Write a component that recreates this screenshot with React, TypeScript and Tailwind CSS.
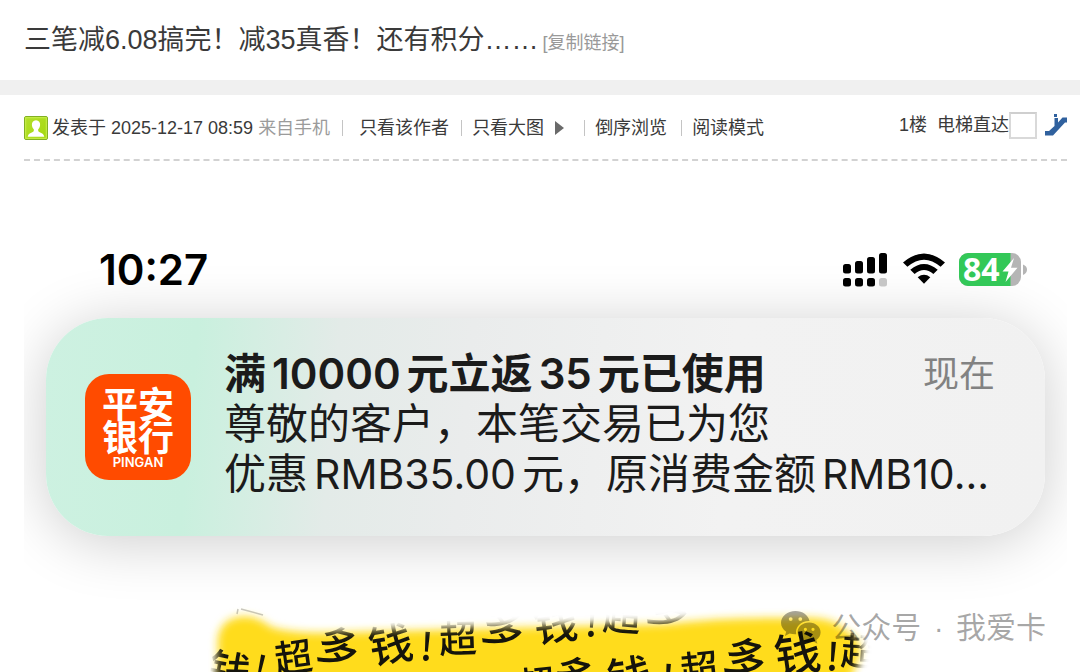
import type { ReactNode } from "react";

const PAGE_FONT = "font-['Liberation_Sans','Noto_Sans_CJK_SC',sans-serif]";
const PHONE_FONT = "font-['Inter','Noto_Sans_CJK_SC',sans-serif]";

function Divider() {
  return <span aria-hidden="true" className="h-4 w-px shrink-0 bg-[#c4c4c4]" />;
}

function Latin({ children, className = "" }: { children: ReactNode; className?: string }) {
  return <span className={`mx-1.5 ${className}`}>{children}</span>;
}

function AuthorIcon() {
  return (
    <svg viewBox="0 0 24 24" className="size-6 shrink-0" aria-hidden="true">
      <defs>
        <linearGradient id="author" x1="0" y1="0" x2="1" y2="1">
          <stop offset="0" stopColor="#b4e02c" />
          <stop offset="1" stopColor="#a3d80d" />
        </linearGradient>
      </defs>
      <rect x="0.5" y="0.5" width="23" height="23" rx="1.5" fill="url(#author)" stroke="#82b022" />
      <rect x="1.7" y="1.7" width="20.6" height="20.6" fill="none" stroke="#c8ee4e" />
      <path
        d="M12 4.2c-2.9 0-4.3 2.2-4.1 4.8.1 1.9.9 3.3 1.9 4.200v1.800c-.5 1.500-5.500 1.600-6.100 5.800h16.600c-.6-4.200-5.600-4.300-6.100-5.800v-1.800c1-.9 1.800-2.300 1.900-4.200.2-2.600-1.200-4.800-4.100-4.800z"
        fill="#fff"
      />
    </svg>
  );
}

function ElevatorIcon() {
  return (
    <svg viewBox="0 0 22 22" className="size-[22px]" aria-hidden="true">
      <path d="M9 0h3v3H9zM0 17h4l5.500-5V4H13v4.500l4.500-5H22v5h-2L8 21.500H0z" fill="#30619e" />
    </svg>
  );
}

function StatusIcons() {
  return (
    <svg viewBox="0 0 186 36" className="h-9 w-[186px]" role="img" aria-label="信号 无线网络 电量">
      <rect x="1" y="12" width="8" height="9.5" rx="2.5" />
      <rect x="13" y="9" width="8" height="12.5" rx="2.5" />
      <rect x="25" y="5" width="8" height="16.5" rx="2.5" />
      <rect x="37" y="1" width="8" height="20.5" rx="2.5" />
      <rect x="1" y="26" width="8" height="8.5" rx="2.5" />
      <rect x="13" y="26" width="8" height="8.5" rx="2.5" />
      <rect x="25" y="26" width="8" height="8.5" rx="2.5" />
      <rect x="37" y="26" width="8" height="8.5" rx="2.5" fill="#c6c6c6" />
      <path d="M61 10.5Q82-7.5 103 10.5L98.6 14.8Q82 .5 65.4 14.8z" />
      <path d="M68.3 17.8Q82 6 95.7 17.8L91.4 22Q82 14 72.6 22z" />
      <path d="M75.7 25.2Q82 20.3 88.3 25.2L82 31.8z" />
      <defs>
        <clipPath id="cell">
          <rect x="117" y="1" width="62" height="33" rx="9" />
        </clipPath>
      </defs>
      <g clipPath="url(#cell)">
        <rect x="117" y="1" width="62" height="33" fill="#b5b5b5" />
        <rect x="117" y="1" width="51.5" height="33" fill="#33c858" />
      </g>
      <path d="M181 12.500q4 1.500 4 5t-4 5.500z" fill="#b5b5b5" />
      <text x="121" y="29" fontSize="32" fontWeight="700" fill="#fff" className="font-['Open_Sans',sans-serif]">
        84
      </text>
      <path d="M172 6L160.500 19.500h6L163.500 30 175.500 15.800h-6.500z" fill="#fff" />
    </svg>
  );
}

type Glyph = { c: string; x: number; y: number; r: number; s: number };

const scribbles: Glyph[] = [
  { c: "钱", x: 206, y: 68, r: 12, s: 42 },
  { c: "!", x: 237, y: 66, r: 12, s: 36 },
  { c: "超", x: 269, y: 55, r: -8, s: 38 },
  { c: "多", x: 315, y: 44, r: 14, s: 42 },
  { c: "钱", x: 366, y: 42, r: -10, s: 44 },
  { c: "!", x: 403, y: 44, r: 4, s: 38 },
  { c: "超", x: 434, y: 36, r: -2, s: 38 },
  { c: "多", x: 480, y: 25, r: 14, s: 42 },
  { c: "钱", x: 531, y: 21, r: -8, s: 44 },
  { c: "!", x: 568, y: 20, r: 4, s: 38 },
  { c: "超", x: 598, y: 14, r: 4, s: 38 },
  { c: "多", x: 645, y: 6, r: 14, s: 42 },
  { c: "超", x: 512, y: 82, r: -6, s: 38 },
  { c: "多", x: 551, y: 74, r: 14, s: 42 },
  { c: "钱", x: 605, y: 74, r: -8, s: 44 },
  { c: "!", x: 644, y: 76, r: 4, s: 38 },
  { c: "超", x: 675, y: 66, r: -6, s: 38 },
  { c: "多", x: 722, y: 55, r: 14, s: 42 },
  { c: "钱", x: 773, y: 51, r: -8, s: 46 },
  { c: "!", x: 809, y: 54, r: 4, s: 38 },
  { c: "超", x: 836, y: 49, r: 4, s: 38 },
];

function PaintedBanner() {
  const shape =
    "M194 90V50Q191 22 214 17Q232 14 247 27Q270 35 330 32L520 27L640 24Q700 17 760 18Q812 15 820 30Q842 40 834 60L822 90z";
  return (
    <svg viewBox="0 0 1043 72" className="block w-full" role="img" aria-label="超多钱">
      <defs>
        <filter id="soft" x="-5%" y="-30%" width="110%" height="160%">
          <feGaussianBlur stdDeviation="4" />
        </filter>
        <mask id="visible" maskUnits="userSpaceOnUse" x="0" y="0" width="1043" height="72">
          <path d={shape} fill="#fff" stroke="#fff" strokeWidth="3" filter="url(#soft)" />
        </mask>
      </defs>
      <path d={shape} fill="#ffdc1c" filter="url(#soft)" />
      <g mask="url(#visible)" fill="#15140c" className="font-['Noto_Sans_CJK_SC',sans-serif]">
        {scribbles.map((g) => (
          <text
            key={`${g.x}-${g.y}`}
            x={g.x}
            y={g.y}
            fontSize={g.s}
            fontWeight="500"
            textAnchor="middle"
            dominantBaseline="central"
            transform={`rotate(${g.r} ${g.x} ${g.y})`}
          >
            {g.c}
          </text>
        ))}
      </g>
      <path d="M213 14l1-5M217 9l22 6" stroke="#77756a" strokeWidth="1.5" opacity="0.4" fill="none" />
    </svg>
  );
}

function WeChatIcon() {
  return (
    <svg viewBox="0 0 40 34" className="h-[34px] w-10" aria-hidden="true">
      <path
        fillRule="evenodd"
        d="M14.5 1C6.5 1 0 6.2 0 12.8c0 3.7 2 6.9 5.2 9l-1.3 4.1 4.7-2.5c2 .6 4 .9 6.6.8-1.5-7.3 5-13.5 13.3-13.2C27.3 5 21.5 1 14.5 1zM9.7 7.2a1.9 1.9 0 1 1 0 3.8 1.9 1.9 0 0 1 0-3.8zm9.6 0a1.9 1.9 0 1 1 0 3.8 1.9 1.9 0 0 1 0-3.8z"
      />
      <path
        fillRule="evenodd"
        d="M28.2 12.5c-6.6 0-11.6 4.4-11.6 9.8s5 9.8 11.6 9.8c1.500 0 2.900-.2 4.200-.6l4 2.200-1.100-3.600c2.700-1.800 4.300-4.600 4.300-7.800 0-5.400-5-9.800-11.400-9.800zm-3.800 5.200a1.600 1.600 0 1 1 0 3.200 1.600 1.600 0 0 1 0-3.200zm7.600 0a1.600 1.600 0 1 1 0 3.200 1.600 1.600 0 0 1 0-3.200z"
      />
    </svg>
  );
}

function Notification() {
  return (
    <article className="mx-[22px] flex h-[218px] items-center rounded-[62px] bg-[linear-gradient(95deg,#cdf1e1_0%,#c9f0de_15%,#e3ebe8_29%,#eaecec_42%,#f2f2f2_68%,#f1f1f1_100%)] pr-[50px] pl-[39px] shadow-[0_6px_60px_rgba(0,0,0,0.2)]">
      <div className="flex size-[106px] shrink-0 flex-col items-center rounded-3xl bg-[#ff4b00] pt-3 font-['Noto_Sans_CJK_SC',sans-serif] text-white">
        <span className="text-[36px] leading-[33px] font-bold">平安</span>
        <span className="text-[36px] leading-[33px] font-bold">银行</span>
        <span className="font-['Inter',sans-serif] text-[13px] leading-5 font-semibold">PINGAN</span>
      </div>
      <div className="ml-[33px] min-w-0 flex-1 pb-1.5 text-[42px] leading-[50px] text-[#1b1b1b]">
        <div className="flex items-center justify-between">
          <h2 className="font-semibold whitespace-nowrap">
            满<Latin>10000</Latin>元立返<Latin>35</Latin>元已使用
          </h2>
          <time className="text-4xl leading-[50px] text-[#828282]">现在</time>
        </div>
        <p className="whitespace-nowrap">尊敬的客户，本笔交易已为您</p>
        <p className="whitespace-nowrap">
          优惠<Latin className="text-[41px]">RMB35.00</Latin>元，原消费金额
          <Latin className="text-[41px]">RMB10...</Latin>
        </p>
      </div>
    </article>
  );
}

export default function App() {
  return (
    <main className={`bg-white text-[#3a3a3a] ${PAGE_FONT}`}>
      <header className="flex h-20 items-baseline gap-1 px-6 pt-5">
        <h1 className="text-[27px] leading-10 whitespace-nowrap">三笔减6.08搞完！减35真香！还有积分……</h1>
        <a href="#link" className="text-lg whitespace-nowrap text-[#999]">
          [复制链接]
        </a>
      </header>
      <div className="h-[15px] bg-[#f0f0f0]" />

      <section className="px-6 pr-[13px]">
        <div className="flex h-[66px] items-center justify-between border-b-2 border-dashed border-[#d2d2d2] text-lg whitespace-nowrap">
          <div className="flex items-center pt-0.5">
            <AuthorIcon />
            <span className="ml-1">
              发表于 2025-12-17 08:59 <span className="text-[#9b9b9b]">来自手机</span>
            </span>
            <nav className="ml-3 flex items-center">
              <Divider />
              <a href="#author" className="mr-3 ml-4">只看该作者</a>
              <Divider />
              <a href="#images" className="mr-5 ml-2.5 flex items-center gap-2.5">
                只看大图
                <svg viewBox="0 0 10 14" className="h-3.5 w-2.5" aria-hidden="true">
                  <path d="M1 0l9 7-9 7z" fill="#6a6a6a" />
                </svg>
              </a>
              <Divider />
              <a href="#reverse" className="mr-3.5 ml-2.5">倒序浏览</a>
              <Divider />
              <a href="#read" className="ml-2.5">阅读模式</a>
            </nav>
          </div>
          <form className="flex items-center pb-1">
            <span className="mr-2.5">1楼</span>
            <label htmlFor="floor">电梯直达</label>
            <input
              id="floor"
              type="text"
              className="h-[27px] w-7 border-2 border-[#d9d9d9] border-t-[#cfcfcf] bg-white px-1 text-sm outline-none"
            />
            <button type="button" aria-label="跳转" className="ml-2">
              <ElevatorIcon />
            </button>
          </form>
        </div>

        <figure className={`relative mt-20 overflow-hidden ${PHONE_FONT}`}>
          <div className="flex h-[58px] items-center justify-between pr-[39px] pl-[75px] text-black">
            <time className="text-[42px] leading-none font-semibold">10:27</time>
            <StatusIcons />
          </div>
          <div className="pt-[19px] pb-16">
            <Notification />
          </div>
          <PaintedBanner />
          <figcaption
            className={`absolute right-[21px] bottom-6 flex items-end gap-2.5 text-[30px] leading-10 text-black/35 ${PAGE_FONT}`}
          >
            <span className="fill-black/35 pb-1">
              <WeChatIcon />
            </span>
            <span className="whitespace-nowrap">
              公众号 <span className="mx-1">·</span> 我爱卡
            </span>
          </figcaption>
        </figure>
      </section>
    </main>
  );
}
